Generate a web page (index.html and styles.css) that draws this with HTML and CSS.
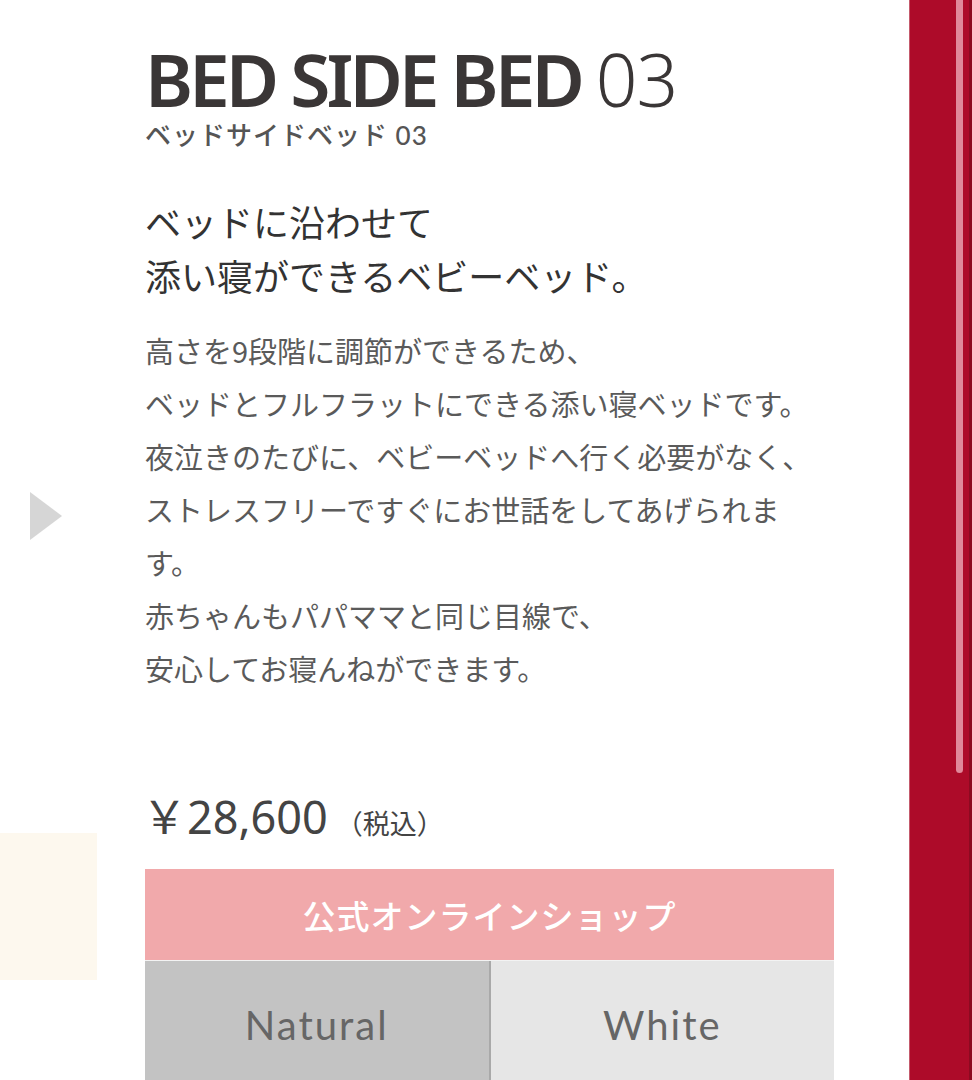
FILE: index.html
```html
<!DOCTYPE html>
<html lang="ja">
<head>
<meta charset="utf-8">
<title>BED SIDE BED 03</title>
<link rel="stylesheet" href="styles.css">
</head>
<body>
<div class="page">
  <aside class="gutter">
    <div class="arrow"></div>
    <div class="slide-peek"></div>
  </aside>
  <main class="content">
    <h1 class="title"><span class="title-bold">BED SIDE BED</span> <span class="title-light">03</span></h1>
    <p class="subtitle">ベッドサイドベッド 03</p>
    <h2 class="lead">ベッドに沿わせて<br>添い寝ができるベビーベッド。</h2>
    <p class="desc">高さを9段階に調節ができるため、<br>ベッドとフルフラットにできる添い寝ベッドです。<br>夜泣きのたびに、ベビーベッドへ行く必要がなく、<br>ストレスフリーですぐにお世話をしてあげられます。<br>赤ちゃんもパパママと同じ目線で、<br>安心してお寝んねができます。</p>
    <p class="price"><span class="yen">￥28,600</span><span class="tax">（税込）</span></p>
    <div class="shop">
      <div class="shop-head">公式オンラインショップ</div>
      <div class="shop-options">
        <div class="opt opt-natural">Natural</div>
        <div class="opt opt-white">White</div>
      </div>
    </div>
  </main>
  <div class="sidebar">
    <div class="thumb"></div>
  </div>
</div>
</body>
</html>
```
FILE: styles.css
```css
html, body {
  margin: 0;
  padding: 0;
  background: #ffffff;
}
body {
  width: 972px;
  height: 1080px;
  overflow: hidden;
  font-family: "Noto Sans CJK JP", "Noto Sans", sans-serif;
}
.page {
  display: flex;
  height: 1080px;
}
.gutter {
  width: 145px;
  flex: none;
  display: flex;
  flex-direction: column;
}
.arrow {
  margin-top: 492px;
  margin-left: 30px;
  width: 0;
  height: 0;
  border-top: 24px solid transparent;
  border-bottom: 24px solid transparent;
  border-left: 32px solid #d6d6d6;
}
.slide-peek {
  margin-top: 293px;
  width: 97px;
  height: 147px;
  background: #fdf8ee;
}
.content {
  width: 689px;
  flex: none;
  padding-top: 39px;
}
.title {
  margin: 0;
  font-family: "Noto Sans", sans-serif;
  font-size: 73px;
  line-height: 80px;
  color: #3a3636;
  white-space: nowrap;
  letter-spacing: -4px;
}
.title-bold {
  font-weight: 600;
}
.title-light {
  font-weight: 300;
  letter-spacing: -1px;
}
.subtitle {
  margin: 0;
  font-family: "Lato", "Noto Sans CJK JP", sans-serif;
  font-size: 26px;
  line-height: 32px;
  font-weight: 500;
  color: #555;
  letter-spacing: 1px;
}
.lead {
  margin: 43px 0 0 0;
  font-size: 36px;
  line-height: 54px;
  font-weight: 400;
  color: #333;
}
.desc {
  margin: 22px 0 0 0;
  font-size: 29px;
  line-height: 53px;
  font-weight: 400;
  color: #5a5a5a;
}
.price {
  margin: 92px 0 0 -3px;
  display: flex;
  align-items: baseline;
  color: #444;
  line-height: 60px;
}
.yen {
  font-family: "Noto Sans", "Noto Sans CJK JP", sans-serif;
  font-size: 45px;
}
.tax {
  font-size: 27px;
  margin-left: 8px;
}
.shop {
  margin-top: 16px;
}
.shop-head {
  height: 91px;
  background: #f1a9ab;
  color: #ffffff;
  display: flex;
  align-items: center;
  justify-content: center;
  font-size: 33px;
  font-weight: 500;
  letter-spacing: 1px;
}
.shop-options {
  display: flex;
  height: 130px;
  border-top: 1px solid #f3f3f3;
}
.opt {
  flex: 1;
  display: flex;
  align-items: flex-start;
  justify-content: center;
  padding-top: 40px;
  font-family: "Lato", "Noto Sans", sans-serif;
  font-size: 40px;
  line-height: 48px;
  color: #666;
  letter-spacing: 2px;
}
.opt-natural {
  background: #c3c3c3;
  border-right: 2px solid #a9a9a9;
}
.opt-white {
  background: #e6e6e6;
}
.sidebar {
  margin-left: 75px;
  flex: 1;
  height: 1080px;
  background: #ad0b29;
  border-left: 1px solid #c45a6c;
  border-right: 3px solid #8c0a21;
  position: relative;
}
.thumb {
  position: absolute;
  left: 46px;
  top: -10px;
  width: 7px;
  height: 783px;
  border-radius: 0 0 4px 4px;
  background: #e0899a;
}
```
